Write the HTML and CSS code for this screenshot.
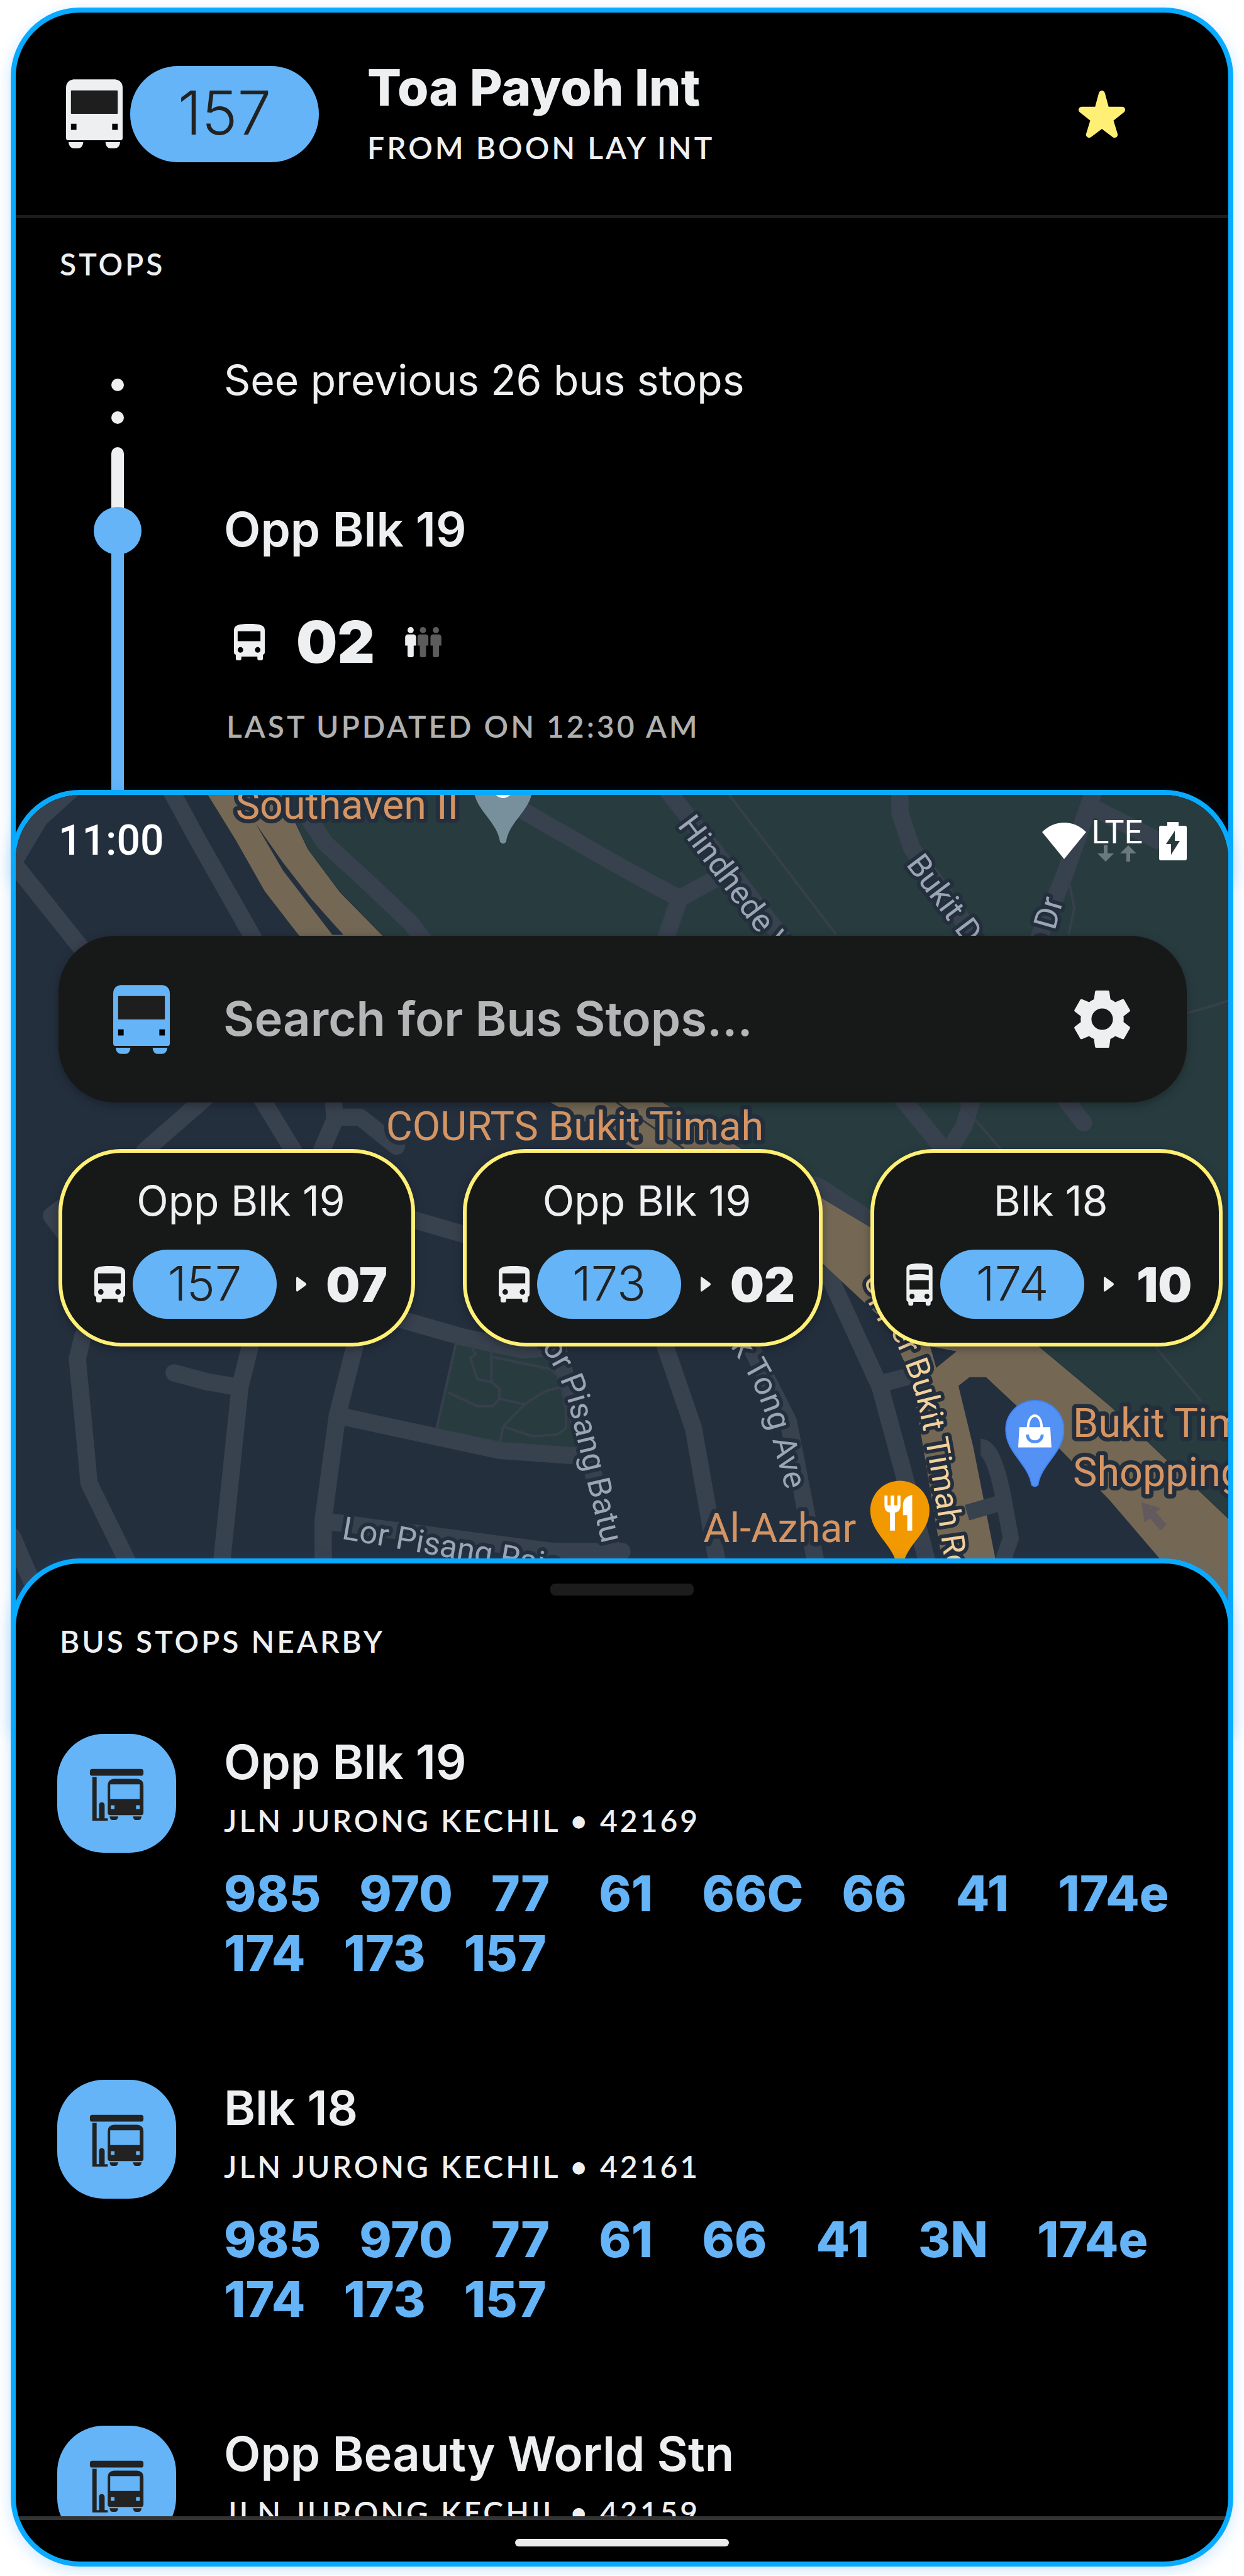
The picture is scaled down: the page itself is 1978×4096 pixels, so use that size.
FILE: index.html
```html
<!DOCTYPE html>
<html lang="en">
<head>
<meta charset="utf-8">
<meta name="viewport" content="width=device-width, initial-scale=1">
<title>Bus Stops</title>
<link rel="stylesheet" href="styles.css">
</head>
<body>
<svg class="defs" aria-hidden="true">
  <symbol id="bus" viewBox="0 0 92 112">
    <path fill="currentColor" d="M12 0H80Q92 2 92 14V95Q92 99 88 99H4Q0 99 0 95V14Q0 2 12 0Z M4 102H28Q27 112 20 112H13Q5 112 4 102Z M64 102H88Q87 112 79 112H72Q65 112 64 102Z"/>
    <rect class="glass" x="8" y="18" width="76" height="38" rx="1"/>
    <path class="lamp" d="M8 72h9v10h-9zM75 72h9v10h-9z"/>
  </symbol>
  <symbol id="bus-front" viewBox="0 0 50 60">
    <path fill="currentColor" fill-rule="evenodd" d="M0 10C0 2 8 0 25 0S50 2 50 10V46Q50 49 47 50V56Q47 59 44 59H41Q38 59 38 56V53H12V56Q12 59 9 59H6Q3 59 3 56V50Q0 49 0 46ZM6 12V28H43V12ZM10.500 37.500A4.500 4.500 0 1 0 10.500 46.500A4.500 4.500 0 1 0 10.500 37.500ZM38.500 37.500A4.500 4.500 0 1 0 38.500 46.500A4.500 4.500 0 1 0 38.500 37.500Z"/>
  </symbol>
  <symbol id="bus-double" viewBox="0 0 42 68">
    <path fill="currentColor" fill-rule="evenodd" d="M0 8C0 2 6 0 21 0S42 2 42 8V58Q42 61 39 62V65Q39 68 36 68H34Q31 68 31 65V62H11V65Q11 68 8 68H6Q3 68 3 65V62Q0 61 0 58ZM5 10V19Q13 17 21 17T36 19V10ZM5 27V42H36V27ZM9 49A4 4 0 1 0 9 57A4 4 0 1 0 9 49ZM33 49A4 4 0 1 0 33 57A4 4 0 1 0 33 49Z"/>
  </symbol>
  <symbol id="bus-stop" viewBox="0 0 193 193">
    <g fill="#222222">
      <rect x="53" y="57" width="87" height="11" rx="4"/>
      <path d="M57 70H64V137H68V116Q68 111 72 111Q77 111 77 116V137H82V141H57Z"/>
      <path fill-rule="evenodd" d="M92 73H130Q140 74 140 84V128Q140 132 136 132H86Q82 132 82 128V84Q82 74 92 73ZM86 82V106H134V82ZM87 116V122H93V116ZM128 116V122H134V116Z"/>
      <path d="M85 134H99Q98 140 94 140H90Q86 140 85 134ZM123 134H137Q136 140 132 140H128Q124 140 123 134Z"/>
    </g>
  </symbol>
  <symbol id="person" viewBox="0 0 18 49">
    <circle cx="9" cy="5" r="5"/>
    <path d="M4 12H14Q18 13 18 17V30H14V46Q14 49 11 49H7Q4 49 4 46V30H0V17Q0 13 4 12Z"/>
  </symbol>
</svg>

<main class="stack">
  <section class="frame route">
    <header class="route-head">
      <svg class="bus-large"><use href="#bus"/></svg>
      <span class="pill pill-large">157</span>
      <div class="route-name">
        <h1>Toa Payoh Int</h1>
        <p class="caps">From Boon Lay Int</p>
      </div>
      <button class="icon-button" type="button" aria-label="Favourite">
        <svg class="star" viewBox="0 0 77 78"><path fill="#fff075" stroke="#fff075" stroke-width="10" stroke-linejoin="round" d="M38.500 6L45.500 32H71L51.500 47.500L59 72L38.500 56.500L18 72L25.500 47.500L6 32H31.500Z"/></svg>
      </button>
    </header>
    <h2 class="caps stops-title">Stops</h2>
    <div class="timeline">
      <div class="rail" aria-hidden="true">
        <span class="dot"></span>
        <span class="dot"></span>
        <span class="past"></span>
        <span class="here"></span>
        <span class="ahead"></span>
      </div>
      <div class="timeline-body">
        <a class="text earlier" href="#">See previous 26 bus stops</a>
        <h3 class="name">Opp Blk 19</h3>
        <div class="arrival">
          <svg class="bus-small"><use href="#bus-front"/></svg>
          <strong>02</strong>
          <svg class="people" viewBox="0 0 59 49">
            <use href="#person" width="18" height="49" fill="#eeeff1"/>
            <use href="#person" x="20" width="18" height="49" fill="#5c5c5c"/>
            <use href="#person" x="41" width="18" height="49" fill="#5c5c5c"/>
          </svg>
        </div>
        <p class="caps updated">Last updated on 12:30 AM</p>
      </div>
    </div>
  </section>

  <section class="frame nearby-map">
    <svg class="map" viewBox="26 1292 1968 1523" preserveAspectRatio="xMidYMin slice" aria-hidden="true">
      <defs>
        <path id="batu" d="M862 2165Q911 2225 926 2290T978 2510"/>
        <path id="tong" d="M1168 2164Q1230 2240 1252 2330T1300 2500"/>
        <path id="upper" d="M1400 2080Q1468 2190 1490 2280T1548 2640"/>
      </defs>
      <rect x="26" y="1292" width="1968" height="1523" fill="#242f3e"/>
      <path fill="#283c3f" stroke="#23313c" stroke-width="2" d="M458 1292L500 1380L552 1450L620 1519L800 1660L1074 1790L1203 1866L1348 1930L1415 1970L1686 2187L1802 2284L1994 2467V1292Z"/>
      <path fill="#283c3f" d="M741 2180L850 2203L892 2200L911 2239L944 2352L812 2344L709 2321Z"/>
      <g class="road">
        <path d="M115 1285L65 1330L22 1402L140 1550"/>
        <path d="M278 1285L322 1366L412 1525"/>
        <path d="M338 1780L235 1870M422 1780L477 1870M541 1780L544 1819L522 1870M554 1815H585L644 1862"/>
        <path d="M110 1955L84 1975L110 2010M660 1978L770 2010M640 2140L752 2172L850 2193L905 2188"/>
        <path d="M135 2170L126 2207L145 2409L209 2540M283 2230L335 2244L386 2253"/>
        <path d="M408 2180L390 2253L360 2540M578 2180L548 2299L525 2469V2540"/>
        <path d="M548 2299L812 2356L953 2366M538 2472L900 2520H1010M905 2188L955 2360L1000 2540"/>
        <path d="M1078 2180L1126 2320L1165 2540M1215 2180L1280 2309L1325 2540"/>
        <path d="M1345 2070L1429 2253L1483 2452L1506 2540M1429 2248L1485 2233"/>
        <path d="M20 2495L70 2610"/>
      </g>
      <g class="road">
        <path d="M503 1332L528 1370L599 1435L667 1500L690 1530"/>
        <path d="M850 1318L1010 1410L1103 1460L1081 1525M1103 1460L1180 1418"/>
        <path d="M1084 1285L1275 1530M1461 1285V1321L1480 1378L1580 1520"/>
        <path d="M1776 1285L1728 1423L1686 1525M1770 1310L1880 1366"/>
        <path d="M1461 1780L1531 1866M1580 1780L1565 1830L1540 1870M1725 1780L1759 1824M1325 1925L1410 1980"/>
      </g>
      <g class="path">
        <path d="M1184 1292L1358 1519M1735 1430L1744 1476L1735 1519M1927 1646L1960 1637L1994 1626M1558 1790L1625 1867M1875 2187L1950 2276"/>
        <path d="M741 2180L709 2321M766 2187L772 2200L764 2206L775 2240L798 2245L811 2255V2272L800 2284H775L728 2262M798 2187V2245M798 2204L895 2224L911 2240L919 2290V2320L905 2330L865 2333L817 2317L852 2281L885 2260L915 2252M817 2317L812 2344M811 2272L852 2281"/>
      </g>
      <path fill="#746855" d="M338 1292L383 1365L430 1448L485 1519L640 1660L892 1790L1030 1866L1200 1960L1335 2052L1440 2150L1480 2238L1529 2532V2815H1994V2467L1802 2284L1686 2187L1415 1995L1348 1955L1203 1866L1074 1790L800 1660L620 1519L552 1450L500 1380L458 1292Z"/>
      <path fill="#242f3e" d="M415 1338L460 1415L540 1519H558L505 1460L460 1402ZM1510 2187L1553 2195L1520 2222ZM1556 2251L1574 2237H1601L1651 2284L1722 2355L1800 2435L1883 2532L1980 2692H1640L1616 2532L1580 2350Z"/>
      <path fill="none" stroke="#38414e" stroke-width="26" d="M1592 2350Q1612 2350 1628 2427L1641 2498L1625 2545M1570 2457L1628 2440"/>
      <path fill="none" stroke="#2c3541" stroke-width="3" d="M1000 1790L1110 1866"/>
      <path fill="#625a5c" d="M1853 2440L1885 2450L1876 2456L1894 2476L1884 2486L1867 2466L1858 2473Z"/>
      <g class="poi">
        <text x="383" y="1331">Southaven II</text>
        <text x="627" y="1852">COURTS Bukit Timah</text>
        <text x="1742" y="2334">Bukit Timah</text>
        <text x="1742" y="2414">Shopping Centre</text>
        <text x="1142" y="2505">Al-Azhar</text>
      </g>
      <g class="street">
        <text transform="translate(1099 1342) rotate(53)">Hindhede Wk</text>
        <text transform="translate(1470 1405) rotate(53)">Bukit Dr</text>
        <text transform="translate(1701 1552) rotate(-74)">e Dr</text>
        <text transform="translate(554 2499) rotate(10)">Lor Pisang Raja</text>
        <text><textPath href="#batu">Lor Pisang Batu</textPath></text>
        <text><textPath href="#tong">uk Tong Ave</textPath></text>
        <text class="major"><textPath href="#upper">Upper Bukit Timah Rd</textPath></text>
      </g>
      <g transform="translate(817 1278)">
        <path fill="#78909c" d="M-48 0A48 48 0 1 1 48 0C48 38 10 55 5 90Q0 96 -5 90C-10 55 -48 38 -48 0Z"/>
        <circle cy="3" r="16" fill="#ffffff"/>
      </g>
      <g transform="translate(1680 2322)">
        <path fill="#5491f5" stroke="#4285f4" stroke-width="2" d="M-47 0A47 47 0 1 1 47 0C47 38 10 55 5 90Q0 94 -5 90C-10 55 -47 38 -47 0Z"/>
        <path fill="#ffffff" d="M-25 -4H25L27 29H-27Z"/>
        <path fill="none" stroke="#ffffff" stroke-width="4" d="M-11 -3C-11 -29 11 -29 11 -3"/>
        <path fill="none" stroke="#5491f5" stroke-width="5" d="M-12 8C-12 24 12 24 12 8"/>
      </g>
      <g transform="translate(1461 2453)">
        <path fill="#f29900" d="M-48 0A48 48 0 1 1 48 0C48 38 10 55 5 90Q0 96 -5 90C-10 55 -48 38 -48 0Z"/>
        <path fill="#ffffff" d="M-25 -24H-20V-8H-15V-24H-9V-8H-4V-24H1V-7Q1 2 -8 4V33H-16V4Q-25 2 -25 -7ZM20 -25V33H12V8H5V-8Q5 -22 20 -25Z"/>
      </g>
    </svg>

    <div class="map-ui">
      <div class="status">
        <time>11:00</time>
        <svg class="wifi" viewBox="0 0 70 58"><path fill="#ffffff" d="M0 15C20 -5 50 -5 70 15L35 58Z"/></svg>
        <span class="network">LTE
          <svg viewBox="0 0 60 26"><path fill="#6a797b" d="M9 0H15V13H25L12 26L-1 13H9ZM45 26H51V13H61L48 0L35 13H45Z"/></svg>
        </span>
        <svg class="battery" viewBox="0 0 44 61"><path fill="#ffffff" fill-rule="evenodd" d="M13 0H31V6H41Q44 6 44 9V58Q44 61 41 61H3Q0 61 0 58V9Q0 6 3 6H13ZM25 14L11 35H19V52L33 30H25Z"/></svg>
      </div>
      <div class="search">
        <svg class="bus-large"><use href="#bus"/></svg>
        <input type="text" aria-label="Search for Bus Stops" placeholder="Search for Bus Stops...">
        <button class="icon-button" type="button" aria-label="Settings">
          <svg class="gear" viewBox="2 2 20 20"><path fill="#eeeff1" d="M19.140 12.940c.04-.3.06-.61.06-.94 0-.32-.02-.64-.07-.94l2.030-1.580c.18-.14.23-.41.12-.61l-1.920-3.320c-.12-.22-.37-.29-.59-.22l-2.390.96c-.5-.38-1.030-.7-1.620-.94l-.36-2.540c-.04-.24-.24-.41-.48-.41h-3.840c-.24 0-.43.17-.47.41l-.36 2.540c-.59.24-1.130.57-1.620.94l-2.390-.96c-.22-.08-.47 0-.59.22L2.740 8.870c-.12.21-.08.47.12.61l2.030 1.580c-.05.3-.09.63-.09.94s.02.64.07.94l-2.030 1.580c-.18.14-.23.41-.12.61l1.920 3.320c.12.22.37.29.59.22l2.390-.96c.5.38 1.030.7 1.620.94l.36 2.540c.05.24.24.41.48.41h3.840c.24 0 .44-.17.47-.41l.36-2.540c.59-.24 1.130-.56 1.620-.94l2.390.96c.22.08.47 0 .59-.22l1.920-3.320c.12-.22.07-.47-.12-.61l-2.010-1.580zM12 15.600c-1.980 0-3.600-1.620-3.600-3.600s1.620-3.600 3.600-3.600 3.600 1.620 3.600 3.600-1.620 3.600-3.600 3.600z"/></svg>
        </button>
      </div>
      <div class="chips">
        <a class="chip" href="#">
          <span class="text">Opp Blk 19</span>
          <span class="chip-row"><svg class="bus-small"><use href="#bus-front"/></svg><span class="pill">157</span><svg class="arrow" viewBox="0 0 16 24"><path d="M0 3Q0 -2 4 2L15 10Q17 12 15 14L4 22Q0 26 0 21Z"/></svg><strong>07</strong></span>
        </a>
        <a class="chip" href="#">
          <span class="text">Opp Blk 19</span>
          <span class="chip-row"><svg class="bus-small"><use href="#bus-front"/></svg><span class="pill">173</span><svg class="arrow" viewBox="0 0 16 24"><path d="M0 3Q0 -2 4 2L15 10Q17 12 15 14L4 22Q0 26 0 21Z"/></svg><strong>02</strong></span>
        </a>
        <a class="chip" href="#">
          <span class="text">Blk 18</span>
          <span class="chip-row"><svg class="bus-small bus-tall"><use href="#bus-double"/></svg><span class="pill">174</span><svg class="arrow" viewBox="0 0 16 24"><path d="M0 3Q0 -2 4 2L15 10Q17 12 15 14L4 22Q0 26 0 21Z"/></svg><strong>10</strong></span>
        </a>
      </div>
    </div>
  </section>

  <section class="frame sheet">
    <span class="handle"></span>
    <h2 class="caps sheet-title">Bus Stops Nearby</h2>
    <div class="stops">
      <article class="stop">
        <svg class="tile"><use href="#bus-stop"/></svg>
        <div>
          <h3 class="name">Opp Blk 19</h3>
          <p class="caps">Jln Jurong Kechil • 42169</p>
          <div class="services">
            <a href="#">985</a><a href="#">970</a><a class="short" href="#">77</a><a class="short" href="#">61</a><a href="#">66C</a><a class="short" href="#">66</a><a class="short" href="#">41</a><a href="#">174e</a><a href="#">174</a><a href="#">173</a><a href="#">157</a>
          </div>
        </div>
      </article>
      <article class="stop">
        <svg class="tile"><use href="#bus-stop"/></svg>
        <div>
          <h3 class="name">Blk 18</h3>
          <p class="caps">Jln Jurong Kechil • 42161</p>
          <div class="services">
            <a href="#">985</a><a href="#">970</a><a class="short" href="#">77</a><a class="short" href="#">61</a><a class="short" href="#">66</a><a class="short" href="#">41</a><a class="short" href="#">3N</a><a href="#">174e</a><a href="#">174</a><a href="#">173</a><a href="#">157</a>
          </div>
        </div>
      </article>
      <article class="stop">
        <svg class="tile"><use href="#bus-stop"/></svg>
        <div>
          <h3 class="name">Opp Beauty World Stn</h3>
          <p class="caps">Jln Jurong Kechil • 42159</p>
        </div>
      </article>
    </div>
    <footer class="home"><span></span></footer>
  </section>
</main>
</body>
</html>
```
FILE: styles.css
```css
* { box-sizing: border-box; }

:root {
  --edge: #08abff;
  --blue: #64b4f7;
  --ink: #eeeff1;
  --panel: #171918;
}

body {
  margin: 0;
  background: #ffffff;
  color: var(--ink);
  font-family: Inter, "Liberation Sans", sans-serif;
}

h1, h2, h3, p { margin: 0; }
a { color: inherit; text-decoration: none; }
svg { display: block; flex: none; }
.defs { position: absolute; width: 0; height: 0; }

.stack { padding: 12px 17px 14px; }

.frame {
  position: relative;
  border: 8px solid var(--edge);
  border-radius: 110px;
  background: #000000;
  box-shadow: 0 6px 24px rgba(10, 132, 240, 0.2);
  overflow: hidden;
}

/* shared text */
.caps {
  font-family: Lato, "Liberation Sans", sans-serif;
  font-size: 48px;
  font-weight: 600;
  line-height: 60px;
  letter-spacing: 4px;
  text-transform: uppercase;
}
.text { font-size: 66px; line-height: 80px; }
.name { font-size: 76px; font-weight: 600; line-height: 88px; }

.pill {
  display: flex;
  align-items: center;
  justify-content: center;
  width: 229px;
  height: 110px;
  padding-bottom: 4px;
  border-radius: 55px;
  background: var(--blue);
  color: #222222;
  font-size: 76px;
  font-weight: 300;
}
.pill-large { width: 300px; height: 153px; border-radius: 76px; font-size: 96px; }

.icon-button {
  display: flex;
  justify-content: center;
  padding: 0;
  border: 0;
  background: none;
}
.bus-large { width: 90px; height: 110px; }
.bus-small { width: 49px; height: 59px; }
.glass { fill: #1e1e1e; }
.lamp { fill: #000000; }

/* route */
.route {
  border-bottom: 0;
  border-radius: 110px 110px 0 0;
  padding-bottom: 214px;
}
.route-head {
  display: flex;
  align-items: center;
  height: 327px;
  padding: 0 163px 0 80px;
  border-bottom: 5px solid #1c1c1c;
}
.route-head .pill { margin-left: 12px; }
.route-name { flex: 1; padding-left: 77px; }
.route-name h1 { font-size: 80px; font-weight: 800; line-height: 84px; padding-bottom: 24px; }
.star { width: 76px; height: 77px; }

.stops-title { padding: 43px 0 0 70px; }

.timeline { display: grid; grid-template-columns: 331px 1fr; }
.rail {
  display: flex;
  flex-direction: column;
  align-items: center;
  width: 78px;
  margin: 0 0 -214px 123px;
  padding-top: 152px;
}
.dot { width: 20px; height: 20px; margin-bottom: 32px; border-radius: 50%; background: var(--ink); }
.past { width: 20px; height: 97px; margin-top: 5px; border-radius: 10px 10px 0 0; background: var(--ink); }
.here { width: 76px; height: 76px; margin: -2px 0; border-radius: 50%; background: var(--blue); }
.ahead { flex: 1; width: 20px; background: var(--blue); }

.timeline-body { padding-top: 114px; }
.earlier { display: block; margin-bottom: 153px; }
.arrival { display: flex; align-items: center; height: 108px; margin: 82px 0 50px; padding-left: 16px; }
.arrival strong { margin: 0 48px 0 50px; font-size: 92px; font-weight: 900; line-height: 108px; }
.people { width: 58px; height: 48px; }
.updated { color: #b0b0b0; padding-left: 4px; }

/* map */
.nearby-map {
  margin-top: -143px;
  padding-bottom: 613px;
  border-bottom: 0;
  border-radius: 110px 110px 0 0;
}
.map { position: absolute; top: 0; left: 0; width: 100%; height: 100%; }
.map .road { fill: none; stroke: #38414e; stroke-width: 28; stroke-linejoin: round; stroke-linecap: round; }
.map .path { fill: none; stroke: #373f4c; stroke-width: 4; }
.map .poi, .map .street {
  font-family: Roboto, "Liberation Sans", sans-serif;
  font-size: 66px;
  fill: #d59563;
  stroke: #242f3e;
  stroke-width: 14;
  stroke-linejoin: round;
  paint-order: stroke;
}
.map .street { font-size: 52px; fill: #9ca5b3; stroke-width: 12; }
.map .major { fill: #f3d19c; }

.map-ui { position: relative; padding-left: 68px; }

.status {
  display: flex;
  align-items: center;
  padding: 37px 66px 0 0;
  color: #ffffff;
  font-family: Roboto, "Liberation Sans", sans-serif;
}
.status time { flex: 1; font-size: 66px; font-weight: 500; line-height: 72px; }
.wifi { width: 70px; height: 58px; }
.network { display: grid; justify-items: center; margin: 0 26px 0 8px; font-size: 52px; line-height: 40px; }
.network svg { width: 60px; height: 26px; overflow: visible; }
.battery { width: 44px; height: 61px; }

.search {
  display: flex;
  align-items: center;
  height: 265px;
  margin: 115px 66px 74px 0;
  padding: 0 87px;
  border-radius: 90px;
  background: var(--panel);
  box-shadow: 0 4px 16px rgba(0, 0, 0, 0.3);
}
.search .bus-large { color: var(--blue); }
.search .glass { fill: #212a33; }
.search .lamp { fill: var(--panel); }
.search input {
  flex: 1;
  min-width: 0;
  height: 92px;
  margin-left: 85px;
  padding: 0 0 4px;
  border: 0;
  outline: 0;
  background: none;
  color: var(--ink);
  font-family: inherit;
  font-size: 76px;
  font-weight: 600;
  line-height: 88px;
}
.search input::placeholder { color: #b4b6b8; opacity: 1; }
.gear { width: 95px; height: 95px; }

.chips { display: flex; gap: 76px; }
.chip {
  flex: none;
  padding: 36px 38px 38px 51px;
  border: 6px solid #fff075;
  border-radius: 100px;
  background: var(--panel);
  text-align: center;
  box-shadow: 0 4px 16px rgba(0, 0, 0, 0.3);
}
.chip .text { display: block; margin-bottom: 38px; }
.chip-row { display: flex; align-items: center; }
.chip-row .pill { margin-left: 12px; }
.chip-row strong { min-width: 98px; font-size: 76px; font-weight: 900; line-height: 88px; }
.bus-tall { width: 42px; height: 67px; }
.arrow { width: 16px; height: 24px; margin: 0 31px; fill: var(--ink); }

/* sheet */
.sheet { margin-top: -276px; }
.handle { display: block; width: 228px; height: 19px; margin: 32px auto 43px; border-radius: 8px; background: #1c1c1c; }
.sheet-title { padding: 0 0 117px 70px; }
.stops { height: 1244px; padding: 0 66px; overflow: hidden; }
.stop { display: flex; gap: 76px; min-height: 395px; margin-bottom: 154px; }
.stop > div { flex: 1; }
.stop .name { margin-bottom: 20px; }
.tile { width: 189px; height: 189px; border-radius: 74px; background: var(--blue); }
.services {
  display: flex;
  flex-wrap: wrap;
  column-gap: 61px;
  margin-top: 38px;
  color: var(--blue);
  font-size: 78px;
  font-weight: 800;
  line-height: 95px;
}
.services .short { padding-right: 17px; }

.home { height: 72px; padding-top: 30px; border-top: 6px solid #333333; }
.home span { display: block; width: 340px; height: 12px; margin: 0 auto; border-radius: 6px; background: #ebebeb; }
```
